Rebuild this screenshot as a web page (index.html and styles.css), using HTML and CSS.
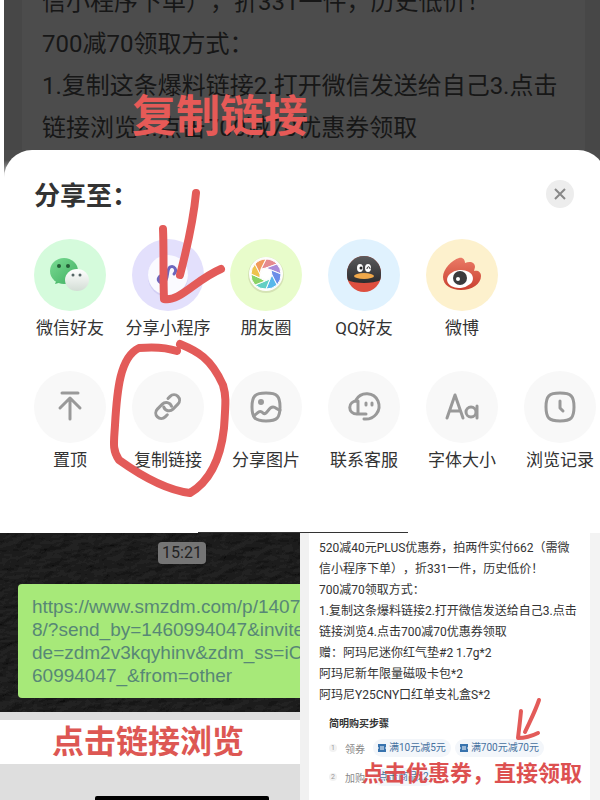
FILE: index.html
```
<!DOCTYPE html>
<html lang="zh-CN">
<head>
    <meta charset="UTF-8" />
    <meta name="viewport" content="width=device-width, initial-scale=1.0" />
    <title>领券步骤</title>
    <link rel="stylesheet" href="styles.css">
</head>

<body>
    <div class="page">
        <section class="share">
            <div class="backdrop">
                <p>信小程序下单），折331一件，历史低价！<br>
                700减70领取方式：<br>
                1.复制这条爆料链接2.打开微信发送给自己3.点击<br>
                链接浏览4.点击700减70优惠券领取</p>
            </div>

            <div class="sheet">
                <div class="sheet-head">
                    <h1>分享至：</h1>
                    <button class="close-button" aria-label="关闭">
                        <svg width="14" height="14" viewBox="0 0 14 14"><path d="M2 2L12 12M12 2L2 12" /></svg>
                    </button>
                </div>

                <div class="share-row">
                    <button class="share-item">
                        <span class="circle green">
                            <svg width="72" height="72" viewBox="0 0 72 72">
                                <defs>
                                    <linearGradient id="wx" x1="0" y1="0" x2="1" y2="1">
                                        <stop offset="0" stop-color="#7bdc94" />
                                        <stop offset="1" stop-color="#3fae60" />
                                    </linearGradient>
                                    <linearGradient id="wx2" x1="0" y1="0" x2="0" y2="1">
                                        <stop offset="0" stop-color="#ffffff" />
                                        <stop offset="1" stop-color="#d3ddd5" />
                                    </linearGradient>
                                </defs>
                                <path d="M23 40l-2 5 7-2z" fill="#4cb86b" />
                                <ellipse cx="30" cy="32" rx="14" ry="13" fill="url(#wx)" />
                                <ellipse cx="43" cy="41" rx="12" ry="11" fill="url(#wx2)" />
                                <circle cx="25" cy="27" r="2" fill="#245c36" />
                                <circle cx="34" cy="27" r="2" fill="#245c36" />
                                <circle cx="39" cy="36" r="1.500" fill="#566" />
                                <circle cx="46" cy="36" r="1.500" fill="#566" />
                            </svg>
                        </span>
                        微信好友
                    </button>
                    <button class="share-item">
                        <span class="circle purple">
                            <svg width="72" height="72" viewBox="0 0 72 72">
                                <circle cx="36" cy="38" r="20" fill="#d3cff5" />
                                <circle cx="36" cy="36" r="20" fill="#fafaff" />
                                <path d="M28 37c-4 4 0 8 4 6 5-2 2-12 6-15 4-2 8 3 4 7" fill="none" stroke="#6d66bd" stroke-width="3" stroke-linecap="round" />
                            </svg>
                        </span>
                        分享小程序
                    </button>
                    <button class="share-item">
                        <span class="circle lime">
                            <svg width="72" height="72" viewBox="0 0 72 72">
                                <circle cx="36" cy="36" r="18" fill="#d5e3b4" />
                                <circle cx="36" cy="35" r="17" fill="#fdfdfd" />
                                <g stroke="#fff" stroke-width="1">
                                    <path d="M31 30L36 20A15 15 0 0 1 47 25L36 29z" fill="#e58a8f" />
                                    <path d="M36 29L47 25A15 15 0 0 1 51 35L41 31z" fill="#a98bd8" />
                                    <path d="M41 31L51 35A15 15 0 0 1 47 46L42 36z" fill="#6b8ee8" />
                                    <path d="M42 36L47 46A15 15 0 0 1 36 50L40 40z" fill="#57b7ea" />
                                    <path d="M40 40L36 50A15 15 0 0 1 25 46L35 42z" fill="#62cfc4" />
                                    <path d="M35 42L25 46A15 15 0 0 1 21 35L30 39z" fill="#8bd267" />
                                    <path d="M30 39L21 35A15 15 0 0 1 25 25L30 35z" fill="#efc34e" />
                                    <path d="M30 35L25 25A15 15 0 0 1 36 20L31 30z" fill="#f09a5c" />
                                </g>
                                <circle cx="36" cy="35" r="5" fill="#fff" />
                            </svg>
                        </span>
                        朋友圈
                    </button>
                    <button class="share-item">
                        <span class="circle blue">
                            <svg width="72" height="72" viewBox="0 0 72 72">
                                <defs>
                                    <linearGradient id="qq" x1="0" y1="0" x2="0" y2="1">
                                        <stop offset="0" stop-color="#5b5b5d" />
                                        <stop offset="1" stop-color="#2c2c2e" />
                                    </linearGradient>
                                    <clipPath id="body"><rect x="19" y="17" width="34" height="36" rx="17" /></clipPath>
                                </defs>
                                <g clip-path="url(#body)">
                                    <rect x="19" y="17" width="34" height="36" fill="#dd4f3f" />
                                    <path d="M19 17H53V41C45 45 27 45 19 41z" fill="url(#qq)" />
                                </g>
                                <ellipse cx="32" cy="29" rx="3" ry="4" fill="#fff" />
                                <ellipse cx="40" cy="29" rx="3" ry="4" fill="#fff" />
                                <circle cx="33" cy="29" r="1.500" fill="#222" />
                                <path d="M39 30c0-3 3-3 3 0" fill="none" stroke="#222" stroke-width="1" />
                                <ellipse cx="36" cy="37" rx="10" ry="3" fill="#f0a84a" />
                            </svg>
                        </span>
                        QQ好友
                    </button>
                    <button class="share-item">
                        <span class="circle yellow">
                            <svg width="72" height="72" viewBox="0 0 72 72">
                                <defs>
                                    <linearGradient id="wb" x1="0" y1="0" x2="0" y2="1">
                                        <stop offset="0" stop-color="#ea7a66" />
                                        <stop offset="1" stop-color="#c9402f" />
                                    </linearGradient>
                                </defs>
                                <path d="M17 38c0-8 9-17 16-19 4-1 6 2 6 5 5-2 10-1 10 4l-1 4c4-1 7 1 7 5 0 8-9 14-20 14-10 0-18-5-18-13z" fill="url(#wb)" />
                                <ellipse cx="34" cy="40" rx="13" ry="9" fill="#fff" transform="rotate(-6 34 40)" />
                                <circle cx="34" cy="39" r="7" fill="#3b3b3d" />
                                <circle cx="32" cy="40" r="2" fill="#fff" />
                            </svg>
                        </span>
                        微博
                    </button>
                </div>

                <div class="share-row">
                    <button class="share-item">
                        <span class="circle">
                            <svg class="line-icon" width="72" height="72" viewBox="0 0 72 72"><path d="M28 22H44M36 48V28M26 37L36 27L46 37" /></svg>
                        </span>
                        置顶
                    </button>
                    <button class="share-item">
                        <span class="circle">
                            <svg class="line-icon" width="72" height="72" viewBox="0 0 72 72">
                                <g transform="rotate(-45 36 36)">
                                    <path d="M30 41H27a5 5 0 0 1 0-11H34a5.500 5.500 0 0 1 5 8" />
                                    <path d="M42 30H45a5 5 0 0 1 0 11H38a5.500 5.500 0 0 1-5-8" />
                                </g>
                            </svg>
                        </span>
                        复制链接
                    </button>
                    <button class="share-item">
                        <span class="circle">
                            <svg class="line-icon" width="72" height="72" viewBox="0 0 72 72">
                                <path d="M36 22C47 22 50 25 50 36S47 50 36 50 22 47 22 36 25 22 36 22z" />
                                <path d="M24 45c4-4 6-6 9-3 4 3 5-6 10-6 3 0 4 3 7 3" />
                                <circle cx="31" cy="31" r="1.500" fill="#999" />
                            </svg>
                        </span>
                        分享图片
                    </button>
                    <button class="share-item">
                        <span class="circle">
                            <svg class="line-icon" width="72" height="72" viewBox="0 0 72 72">
                                <path d="M28 29C33 20 46 21 50 30C54 40 46 49 36 48" />
                                <path d="M30 30V43C19 44 19 29 30 30M30 43H38M38 32v2M44 32v2" />
                            </svg>
                        </span>
                        联系客服
                    </button>
                    <button class="share-item">
                        <span class="circle">
                            <svg class="line-icon" width="72" height="72" viewBox="0 0 72 72">
                                <path d="M21 47L29 24L37 47M24 40H34" />
                                <circle cx="45" cy="41" r="5" />
                                <path d="M51 35V47" />
                            </svg>
                        </span>
                        字体大小
                    </button>
                    <button class="share-item">
                        <span class="circle">
                            <svg class="line-icon" width="72" height="72" viewBox="0 0 72 72">
                                <path d="M36 22C47 22 50 25 50 36S47 50 36 50 22 47 22 36 25 22 36 22z" />
                                <path d="M36 30V37L39 40" />
                            </svg>
                        </span>
                        浏览记录
                    </button>
                </div>
            </div>
        </section>

        <div class="steps">
            <section class="chat">
                <div class="chat-window">
                    <svg class="texture" width="100%" height="100%">
                        <filter id="leather" x="0" y="0" width="100%" height="100%">
                            <feTurbulence type="fractalNoise" baseFrequency="0.06 0.12" numOctaves="4" seed="4" />
                            <feDiffuseLighting surfaceScale="2" lighting-color="#262626">
                                <feDistantLight azimuth="230" elevation="40" />
                            </feDiffuseLighting>
                        </filter>
                        <rect width="100%" height="100%" filter="url(#leather)" />
                    </svg>
                    <time class="time">15:21</time>
                    <a class="bubble" href="#">https://www.smzdm.com/p/14070<br>8/?send_by=1460994047&amp;invite<br>de=zdm2v3kqyhinv&amp;zdm_ss=iO<br>60994047_&amp;from=other</a>
                </div>
                <p class="caption">点击链接浏览</p>
                <div class="next-shot"></div>
            </section>

            <section class="coupon">
                <p class="info">520减40元PLUS优惠券，拍两件实付662（需微<br>
                信小程序下单），折331一件，历史低价！<br>
                700减70领取方式：<br>
                1.复制这条爆料链接2.打开微信发送给自己3.点击<br>
                链接浏览4.点击700减70优惠券领取<br>
                赠：阿玛尼迷你红气垫#2 1.7g*2<br>
                阿玛尼新年限量磁吸卡包*2<br>
                阿玛尼Y25CNY口红单支礼盒S*2</p>
                <h2>简明购买步骤</h2>
                <ol class="buy-steps">
                    <li>
                        <span class="num">1</span>
                        <span class="step-name">领券</span>
                        <a class="chip" href="#"><svg width="8" height="8" viewBox="0 0 8 8"><path d="M0 0H8V3L7 4L8 5V8H0V5L1 4L0 3z" /><path class="cut" d="M2 3H6M2 5H6" /></svg>满10元减5元</a>
                        <a class="chip" href="#"><svg width="8" height="8" viewBox="0 0 8 8"><path d="M0 0H8V3L7 4L8 5V8H0V5L1 4L0 3z" /><path class="cut" d="M2 3H6M2 5H6" /></svg>满700元减70元</a>
                    </li>
                    <li>
                        <span class="num">2</span>
                        <span class="step-name">加购</span>
                        <a class="chip" href="#">点击商品x2</a>
                    </li>
                </ol>
                <p class="coupon-note">点击优惠券，直接领取</p>
            </section>
        </div>

        <!-- 红色手写标注 -->
        <p class="copy-note">复制链接</p>
        <svg class="marks" width="600" height="800" viewBox="0 0 600 800">
            <path d="M196 193C193 225 186 252 180 275" />
            <path d="M163 229C164 250 163 280 164 299C180 302 195 280 221 269" />
            <path d="M177 351C165 347 150 347 139 348C120 357 117 390 115 425C114 442 112 450 119 460C140 475 165 490 190 493C212 480 221 455 224 428C226 400 226 395 223 385C211 358 197 351 180 344" />
            <g class="thin">
                <path d="M539 700C535 712 530 721 525 732" />
                <path d="M521 711C520 722 519 729 518 738C525 738 532 736 538 733" />
            </g>
        </svg>
    </div>
</body>
</html>
```
FILE: styles.css
```
* {
    box-sizing: border-box;
}

body {
    margin: 0;
    font-family: Roboto, 'Noto Sans CJK SC', sans-serif;
    color: #333;
    background-color: #fff;
    text-spacing-trim: space-all;
}

h1, h2, p, ol {
    margin: 0;
    padding: 0;
}

button {
    border: none;
    background: none;
    padding: 0;
    font-family: inherit;
    color: inherit;
    cursor: pointer;
}

a {
    text-decoration: none;
}

svg {
    display: block;
}

.page {
    position: relative;
    height: 100vh;
    overflow: hidden;
    display: flex;
    flex-direction: column;
}

/* --- 分享面板 --- */
.share {
    margin-left: 4px;
    background: linear-gradient(#4c4c4c 160px, #fff 182px);
}

.backdrop {
    height: 150px;
    overflow: hidden;
    display: flex;
    align-items: flex-end;
    padding: 0 0 1px 20px;
    border-left: 18px solid #474747;
    border-right: 15px solid #474747;
    color: #171717;
    font-size: 24px;
    line-height: 42px;
    white-space: nowrap;
}

.sheet {
    margin-right: -6px;
    padding: 24px 0 55px 17px;
    background-color: #fff;
    border-radius: 28px 28px 0 0;
}

.sheet-head {
    display: flex;
    justify-content: space-between;
    align-items: center;
    height: 40px;
    padding: 0 32px 0 13px;
}

.sheet-head h1 {
    padding-top: 4px;
    font-size: 26px;
    font-weight: 700;
    line-height: 40px;
}

.close-button {
    width: 28px;
    height: 28px;
    border-radius: 50%;
    background-color: #ededed;
    display: flex;
    align-items: center;
    justify-content: center;
}

.close-button svg {
    stroke: #888;
    stroke-width: 2;
}

.share-row {
    display: grid;
    grid-template-columns: repeat(6, 98px);
    height: 132px;
    padding-top: 25px;
}

.share-item {
    display: flex;
    flex-direction: column;
    align-items: center;
    gap: 5px;
    font-size: 17px;
    line-height: 24px;
    white-space: nowrap;
}

.circle {
    width: 72px;
    height: 72px;
    border-radius: 50%;
    background-color: #f8f8f8;
}

.green { background-color: #d5fbdc; }
.purple { background-color: #e3e0fc; }
.lime { background-color: #e8fccb; }
.blue { background-color: #e0f2fe; }
.yellow { background-color: #fdf1cd; }

.line-icon {
    fill: none;
    stroke: #999;
    stroke-width: 3;
    stroke-linecap: round;
    stroke-linejoin: round;
}

/* --- 下方两张截图 --- */
.steps {
    position: relative;
    flex: 1;
    display: grid;
    grid-template-columns: 1fr 1fr;
    min-height: 0;
}

.steps::before {
    content: '';
    position: absolute;
    left: 33%;
    top: -1px;
    width: 35%;
    height: 2px;
    background-color: #333;
}

.chat {
    display: flex;
    flex-direction: column;
    min-width: 0;
    background-color: #dedede;
}

.chat-window {
    position: relative;
    padding: 9px 0 14px 18px;
    overflow: hidden;
    background-color: #151515;
}

.texture {
    position: absolute;
    left: 0;
    top: 0;
}

.time {
    position: relative;
    display: block;
    width: 48px;
    margin-left: 140px;
    border-radius: 4px;
    background-color: #757575;
    color: #222;
    font-size: 16px;
    line-height: 22px;
    text-align: center;
}

.bubble {
    position: relative;
    display: block;
    margin-top: 20px;
    padding: 11px 0 11px 14px;
    border-radius: 4px 0 0 4px;
    background-color: #a7e979;
    color: #578776;
    font-family: 'Liberation Sans', sans-serif;
    font-size: 19px;
    line-height: 23px;
    white-space: nowrap;
}

.caption {
    margin-top: 8px;
    padding-left: 52px;
    background-color: #fff;
    color: #dd5753;
    font-size: 32px;
    font-weight: 700;
    line-height: 44px;
}

.next-shot {
    width: 58%;
    height: 4px;
    margin: auto 0 0 95px;
    border-radius: 2px 2px 0 0;
    background-color: #000;
}

.coupon {
    position: relative;
    min-width: 0;
    padding: 5px 0 0 10px;
    border-left: 9px solid #f1f1f1;
    border-right: 10px solid #f3f3f3;
    background-color: #fff;
    white-space: nowrap;
}

.info {
    font-size: 12px;
    line-height: 21px;
}

.coupon h2 {
    margin: 8px 0 0 10px;
    font-size: 10px;
    font-weight: 700;
    line-height: 20px;
}

.buy-steps {
    margin: 4px 0 0 10px;
    list-style: none;
    font-size: 10px;
}

.buy-steps li {
    display: flex;
    align-items: center;
    height: 20px;
    margin-bottom: 9px;
}

.num {
    width: 8px;
    margin-right: 8px;
    border-radius: 50%;
    background-color: #f2f2f2;
    color: #999;
    font-size: 7px;
    line-height: 8px;
    text-align: center;
}

.step-name {
    width: 28px;
    color: #888;
}

.chip {
    display: flex;
    align-items: center;
    gap: 3px;
    margin-right: 4px;
    padding: 0 5px;
    border-radius: 9px;
    background-color: #f3f6fa;
    color: #46719f;
    line-height: 18px;
}

.chip svg {
    fill: #3873ae;
}

.chip .cut {
    stroke: #fff;
}

/* --- 标注 --- */
.copy-note {
    position: absolute;
    left: 132px;
    top: 89px;
    color: #e65a57;
    font-size: 44px;
    font-weight: 700;
    line-height: 56px;
}

.coupon-note {
    position: absolute;
    left: 53px;
    top: 226px;
    color: #dd5050;
    font-size: 22px;
    font-weight: 700;
    line-height: 30px;
}

.marks {
    position: absolute;
    left: 0;
    top: 0;
    fill: none;
    stroke: #e35b59;
    stroke-width: 8;
    stroke-linecap: round;
    stroke-linejoin: round;
    pointer-events: none;
}

.marks .thin {
    stroke-width: 4;
}
```
